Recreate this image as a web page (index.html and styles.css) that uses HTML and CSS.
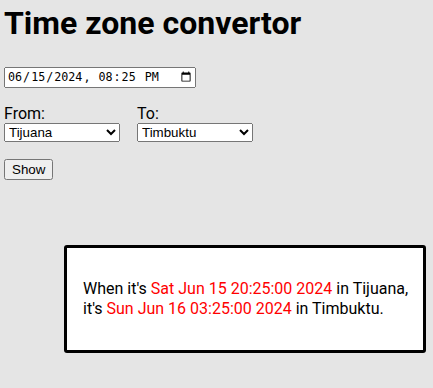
FILE: index.html
```html
<!DOCTYPE html>
<html lang="en">
<head>
    <meta charset="UTF-8">
    <meta name="viewport" content="width=device-width, initial-scale=1.0">
    <title>Time zone convertor</title>
    <link rel="stylesheet" href="styles.css">
</head>
<body>
    <h1>Time zone convertor</h1>
    <div class="when">
        <input type="datetime-local" value="2024-06-15T20:25">
    </div>
    <div class="zones">
        <label class="zone">
            From:
            <select>
                <option>Tijuana</option>
                <option>Timbuktu</option>
            </select>
        </label>
        <label class="zone">
            To:
            <select>
                <option>Timbuktu</option>
                <option>Tijuana</option>
            </select>
        </label>
    </div>
    <button class="show">Show</button>
    <div class="result">
        <p>When it's <span class="time">Sat Jun 15 20:25:00 2024</span> in Tijuana,<br>
        it's <span class="time">Sun Jun 16 03:25:00 2024</span> in Timbuktu.</p>
    </div>
</body>
</html>
```

FILE: styles.css
```css
body {
    font-family: Roboto, "Liberation Sans", sans-serif;
    margin: 0;
    padding: 0 4px;
    background-color: #e5e5e5;
    color: #000;
}
h1 {
    font-size: 32px;
    font-weight: bold;
    margin: 4px 0 24px;
}
.when input {
    font-size: 11.7px;
    width: 192px;
    height: 21px;
    box-sizing: border-box;
}
.zones {
    display: flex;
    gap: 17px;
    margin-top: 16px;
}
.zone {
    display: flex;
    flex-direction: column;
    font-size: 16px;
}
.zone select {
    width: 116px;
}
.show {
    margin-top: 17px;
}
.result {
    width: 340px;
    height: 102px;
    margin: 65px 0 0 60px;
    padding: 0 0 0 16px;
    background-color: #fff;
    border: 3px solid #000;
    border-radius: 3px;
    display: flex;
    align-items: center;
    font-size: 16px;
}
.result p {
    margin: 0;
    line-height: 20px;
    white-space: nowrap;
}
.time {
    color: #f00;
}
```
